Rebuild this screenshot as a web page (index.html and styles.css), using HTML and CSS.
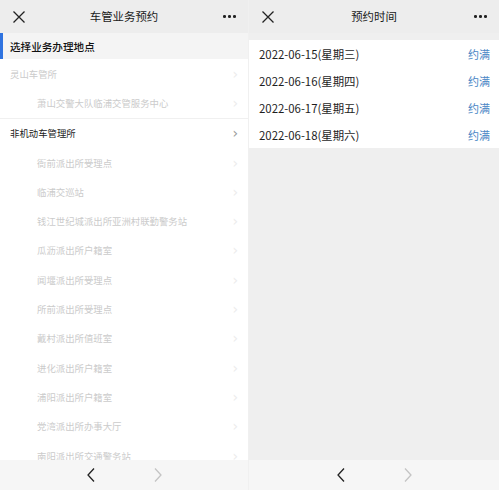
FILE: index.html
```html
<!DOCTYPE html>
<html lang="zh">
<head>
<meta charset="utf-8">
<link rel="stylesheet" href="styles.css">
</head>
<body>
<div class="screens">
  <section class="panel left">
    <header class="topbar">
      <svg class="close" width="14" height="14" viewBox="0 0 14 14"><path d="M1.5 1.5L12.5 12.5M12.5 1.5L1.5 12.5" stroke="#222" stroke-width="1.3" fill="none"/></svg>
      <div class="title">车管业务预约</div>
      <div class="dots"><i></i><i></i><i></i></div>
    </header>
    <div class="section-title">选择业务办理地点</div>
    <div class="list">
      <div class="row faded">灵山车管所<span class="chev faint">›</span></div>
      <div class="row faded sub">萧山交警大队临浦交管服务中心<span class="chev faint">›</span></div>
      <div class="row group">非机动车管理所<span class="chev">›</span></div>
      <div class="row faded sub">衙前派出所受理点<span class="chev faint">›</span></div>
      <div class="row faded sub">临浦交巡站<span class="chev faint">›</span></div>
      <div class="row faded sub">钱江世纪城派出所亚洲村联勤警务站<span class="chev faint">›</span></div>
      <div class="row faded sub">瓜沥派出所户籍室<span class="chev faint">›</span></div>
      <div class="row faded sub">闻堰派出所受理点<span class="chev faint">›</span></div>
      <div class="row faded sub">所前派出所受理点<span class="chev faint">›</span></div>
      <div class="row faded sub">戴村派出所值班室<span class="chev faint">›</span></div>
      <div class="row faded sub">进化派出所户籍室<span class="chev faint">›</span></div>
      <div class="row faded sub">浦阳派出所户籍室<span class="chev faint">›</span></div>
      <div class="row faded sub">党湾派出所办事大厅<span class="chev faint">›</span></div>
      <div class="row faded sub">南阳派出所交通警务站<span class="chev faint">›</span></div>
    </div>
    <footer class="bottombar">
      <svg width="10" height="16" viewBox="0 0 10 16"><path d="M8 1.5L2 8L8 14.5" stroke="#222" stroke-width="1.3" fill="none"/></svg>
      <svg width="10" height="16" viewBox="0 0 10 16"><path d="M2 1.5L8 8L2 14.5" stroke="#c4c4c4" stroke-width="1.3" fill="none"/></svg>
    </footer>
  </section>
  <section class="panel right">
    <header class="topbar">
      <svg class="close" width="14" height="14" viewBox="0 0 14 14"><path d="M1.5 1.5L12.5 12.5M12.5 1.5L1.5 12.5" stroke="#222" stroke-width="1.3" fill="none"/></svg>
      <div class="title">预约时间</div>
      <div class="dots"><i></i><i></i><i></i></div>
    </header>
    <div class="dates">
      <div class="date-row"><span>2022-06-15(星期三)</span><span class="full">约满</span></div>
      <div class="date-row"><span>2022-06-16(星期四)</span><span class="full">约满</span></div>
      <div class="date-row"><span>2022-06-17(星期五)</span><span class="full">约满</span></div>
      <div class="date-row"><span>2022-06-18(星期六)</span><span class="full">约满</span></div>
    </div>
    <div class="filler"></div>
    <footer class="bottombar">
      <svg width="10" height="16" viewBox="0 0 10 16"><path d="M8 1.5L2 8L8 14.5" stroke="#222" stroke-width="1.3" fill="none"/></svg>
      <svg width="10" height="16" viewBox="0 0 10 16"><path d="M2 1.5L8 8L2 14.5" stroke="#c4c4c4" stroke-width="1.3" fill="none"/></svg>
    </footer>
  </section>
</div>
</body>
</html>
```
FILE: styles.css
```css
* { box-sizing: border-box; }
html, body { margin: 0; padding: 0; }
body {
  width: 499px;
  height: 490px;
  overflow: hidden;
  background: #ffffff;
  font-family: "Noto Sans CJK SC", "Noto Sans", "Liberation Sans", sans-serif;
  color: #222;
}
.screens {
  display: grid;
  grid-template-columns: 249px 250px;
  height: 490px;
}
.panel {
  position: relative;
  height: 490px;
  overflow: hidden;
  display: flex;
  flex-direction: column;
}
.left { background: #ffffff; border-right: 1px solid #f0f0f0; }
.right { background: #efefef; }

.topbar {
  height: 33px;
  flex: none;
  background: #ededed;
  display: flex;
  align-items: center;
  justify-content: space-between;
  padding: 0 12px 0 12px;
  position: relative;
}
.topbar .title {
  position: absolute;
  left: 0; right: 0;
  text-align: center;
  font-size: 11.4px;
  color: #1a1a1a;
  line-height: 33px;
  pointer-events: none;
}
.close { position: relative; z-index: 1; }
.dots { display: flex; gap: 2.5px; position: relative; z-index: 1; }
.dots i { width: 2.6px; height: 2.6px; border-radius: 50%; background: #222; display: block; }

.section-title {
  height: 26px;
  flex: none;
  background: #f4f4f4;
  border-left: 3px solid #2f73e0;
  display: flex;
  align-items: center;
  padding-left: 7px;
  font-size: 10.6px;
  color: #111;
  font-weight: 500;
}
.list { flex: none; }
.row {
  height: 29.3px;
  display: flex;
  align-items: center;
  justify-content: space-between;
  font-size: 9.4px;
  padding: 0 10px 0 10px;
}
.row.sub { padding-left: 37px; }
.row.faded { color: #cbcbcb; }
.row.group { color: #222; border-top: 1px solid #f0f0f0; height: 30.3px; }
.chev { font-size: 14px; color: #9a9a9a; line-height: 1; font-family: "DejaVu Sans", sans-serif; }
.chev.faint { color: #ececec; }

.bottombar {
  position: absolute;
  left: 0; right: 0; bottom: 0;
  height: 30px;
  background: #f6f6f6;
  display: flex;
  align-items: center;
  justify-content: center;
  gap: 57px;
}

.dates {
  margin-top: 7px;
  background: #ffffff;
  flex: none;
}
.date-row {
  height: 27px;
  display: flex;
  align-items: center;
  justify-content: space-between;
  padding: 0 9px 0 10px;
  font-size: 11.4px;
  color: #1e1e1e;
}
.date-row .full { color: #4a86c5; font-size: 11px; }
.filler { flex: 1; }
```
